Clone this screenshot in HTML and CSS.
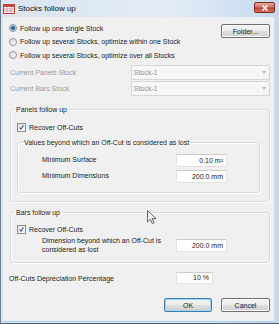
FILE: index.html
```html
<!DOCTYPE html>
<html lang="en">
<head>
  <meta charset="UTF-8">
  <title>Stocks follow up</title>
  <link rel="stylesheet" href="styles.css">
</head>
<body>

  <div class="window">
    <div class="titlebar">
      <svg class="app-icon" viewBox="0 0 12 10">
        <rect x="0.5" y="0.5" width="11" height="9" fill="#fff" stroke="#b5403a"/>
        <rect x="0.5" y="0.5" width="11" height="2.5" fill="#d2453d"/>
        <path d="M1 5h10M1 7h10M4 3v6M8 3v6" stroke="#e58c87" stroke-width="0.8"/>
      </svg>
      <span class="title">Stocks follow up</span>
      <div class="close">
        <svg viewBox="0 0 8 6"><path d="M1.5 0.5l5 5M6.5 0.5l-5 5" stroke="#fff" stroke-width="1.6"/></svg>
      </div>
    </div>

    <div class="client">
      <div class="mode-row">
        <div class="radios">
          <label class="radio"><span class="dot checked"></span>Follow up one single Stock</label>
          <label class="radio"><span class="dot"></span>Follow up several Stocks, optimize within one Stock</label>
          <label class="radio"><span class="dot"></span>Follow up several Stocks, optimize over all Stocks</label>
        </div>
        <button class="btn folder">Folder...</button>
      </div>

      <div class="stock-row first">
        <span class="muted">Current Panels Stock</span>
        <div class="combo">Stock-1<span class="arrow"></span></div>
      </div>
      <div class="stock-row">
        <span class="muted">Current Bars Stock</span>
        <div class="combo">Stock-1<span class="arrow"></span></div>
      </div>

      <fieldset class="group panels">
        <legend>Panels follow up</legend>
        <label class="check"><span class="box"><svg viewBox="0 0 9 9"><path d="M2 4.6l1.8 2L7 1.8" fill="none" stroke="#3f5590" stroke-width="1.3"/></svg></span>Recover Off-Cuts</label>
        <fieldset class="group inner">
          <legend>Values beyond which an Off-Cut is considered as lost</legend>
          <div class="value-row">
            <span class="value-label">Minimum Surface</span>
            <span class="input">0.10 m²</span>
          </div>
          <div class="value-row">
            <span class="value-label">Minimum Dimensions</span>
            <span class="input">200.0 mm</span>
          </div>
        </fieldset>
      </fieldset>

      <fieldset class="group bars">
        <legend>Bars follow up</legend>
        <label class="check"><span class="box"><svg viewBox="0 0 9 9"><path d="M2 4.6l1.8 2L7 1.8" fill="none" stroke="#3f5590" stroke-width="1.3"/></svg></span>Recover Off-Cuts</label>
        <div class="value-row two-lines">
          <span class="value-label">Dimension beyond which an Off-Cut is<br>considered as lost</span>
          <span class="input">200.0 mm</span>
        </div>
      </fieldset>

      <div class="depr-row">
        <span class="depr-label">Off-Cuts Depreciation Percentage</span>
        <span class="input percent">10 %</span>
      </div>

      <div class="actions">
        <button class="btn default">OK</button>
        <button class="btn cancel">Cancel</button>
      </div>
    </div>

    <!-- mouse pointer caught in the screenshot -->
    <svg class="cursor" viewBox="0 0 10 14">
      <path d="M0.5 0.5v11.5l2.8-2.7 2 4.2 1.8-0.8-2-4.1h3.9z" fill="#f4f4f4" stroke="#555" stroke-width="0.9"/>
    </svg>
  </div>

</body>
</html>
```

FILE: styles.css
```css
* {
  box-sizing: border-box;
}
body {
  margin: 0;
  font-family: "Liberation Sans", Arial, sans-serif;
  font-size: 7px;
  color: #222;
}
.window {
  position: relative;
  width: 279px;
  height: 324px;
  display: flex;
  flex-direction: column;
  background: linear-gradient(90deg, #d9e4f0, #e3ecf6 60%, #c6daee);
  border-left: 1px solid #6d7c8c;
  border-bottom: 1px solid #4d5d6d;
}
.titlebar {
  height: 17px;
  flex-shrink: 0;
  display: flex;
  align-items: center;
  padding-left: 2px;
}
.app-icon {
  width: 12px;
  height: 10px;
  margin-right: 3px;
}
.title {
  font-size: 8px;
  color: #111;
}
.close {
  margin-left: auto;
  margin-right: 4px;
  align-self: flex-start;
  margin-top: 2px;
  width: 21px;
  height: 11px;
  border: 1px solid #7c2b22;
  border-radius: 2px;
  background: linear-gradient(#e9a99c, #d3705f 45%, #c2402d 55%, #d8705c);
  display: flex;
  align-items: center;
  justify-content: center;
}
.close svg {
  width: 8px;
  height: 6px;
}
.client {
  flex: 1;
  margin: 0 5px 2px 2px;
  background: #f0f0f0;
  box-shadow: 0 1px 0 #9fd3e6;
}

/* top radios */
.mode-row {
  display: flex;
  justify-content: space-between;
  align-items: flex-start;
  padding: 0 4px 0 6px;
}
.radios {
  display: flex;
  flex-direction: column;
  margin-top: 4.5px;
}
.radio {
  display: flex;
  align-items: center;
  gap: 3px;
  height: 13.5px;
}
.dot {
  width: 8px;
  height: 8px;
  border-radius: 50%;
  border: 1px solid #909396;
  background: linear-gradient(135deg, #dcdcdc, #fbfbfb);
}
.dot.checked {
  background: radial-gradient(circle, #1d4f86 0, #3d7ab3 1.6px, #a9cbe6 2.6px, #eef4fa 3.2px);
}
.btn {
  font: inherit;
  color: #222;
  height: 14px;
  padding: 0;
  border: 1px solid #707070;
  border-radius: 2px;
  background: linear-gradient(#f4f4f4, #ececec 48%, #dedede 52%, #d0d0d0);
  box-shadow: inset 0 0 0 1px #fcfcfc;
}
.folder {
  width: 49px;
  margin-top: 7px;
}

/* stock combos */
.stock-row {
  display: flex;
  align-items: center;
  justify-content: space-between;
  padding: 0 4px 0 7px;
  height: 15px;
  margin-top: 1px;
}
.stock-row.first {
  margin-top: 3px;
}
.muted {
  color: #9a9a9a;
}
.combo {
  width: 139px;
  height: 15px;
  border: 1px solid #d3d6d9;
  border-radius: 1px;
  background: #f6f6f6;
  color: #8f8f8f;
  display: flex;
  align-items: center;
  justify-content: space-between;
  padding: 0 3px 0 2px;
}
.arrow {
  width: 0;
  height: 0;
  border-left: 2.5px solid transparent;
  border-right: 2.5px solid transparent;
  border-top: 3px solid #b4b4b4;
}

/* group boxes */
.group {
  margin: 0;
  min-width: 0;
  border: 1px solid #d5dde3;
  border-radius: 3px;
  box-shadow: 1px 1px 0 #fff, inset 1px 1px 0 #fff;
}
.group legend {
  line-height: 9px;
  padding: 0 2px;
  margin-left: -3px;
}
.panels {
  margin: 8.5px 4px 0 7px;
  padding: 0 9px 8px 6px;
}
.bars {
  margin: 5.5px 4px 0 7px;
  padding: 0 9px 8px 6px;
}
.inner {
  margin-top: 5.5px;
  padding: 7.5px 0 9px 5px;
}
.inner legend {
  padding: 0 1px;
  margin-left: 0;
}
.check {
  display: flex;
  align-items: center;
  gap: 3px;
  height: 10px;
  margin-top: 8.5px;
}
.bars .check {
  margin-top: 7.5px;
}
.box {
  width: 9px;
  height: 9px;
  border: 1px solid #8f8f8f;
  background: linear-gradient(135deg, #e2e2e2, #fdfdfd);
}
.box svg {
  display: block;
  width: 7px;
  height: 7px;
}
.value-row {
  display: flex;
  align-items: center;
  height: 13px;
  padding-left: 19px;
}
.value-row + .value-row {
  margin-top: 3px;
}
.value-label {
  width: 134px;
  line-height: 8.5px;
}
.two-lines {
  height: 17px;
  margin-top: 3px;
  padding-left: 25px;
}
.input {
  width: 51px;
  height: 13px;
  background: #fff;
  border: 1px solid #e2e3e5;
  border-top-color: #c9cbcf;
  text-align: right;
  padding-right: 3px;
  line-height: 11px;
}

/* bottom */
.depr-row {
  display: flex;
  align-items: center;
  height: 12px;
  margin-top: 9px;
  padding-left: 6px;
}
.depr-label {
  width: 167px;
}
.input.percent {
  width: 37px;
  height: 12px;
  line-height: 10px;
}
.actions {
  display: flex;
  justify-content: flex-end;
  gap: 9px;
  margin-top: 14px;
  padding-right: 4px;
}
.default {
  width: 48px;
  border-color: #3c7fb1;
  box-shadow: inset 0 0 0 1px #9fd5f3;
}
.cancel {
  width: 49px;
}
.cursor {
  position: absolute;
  left: 146px;
  top: 210px;
  width: 10px;
  height: 14px;
}
```
